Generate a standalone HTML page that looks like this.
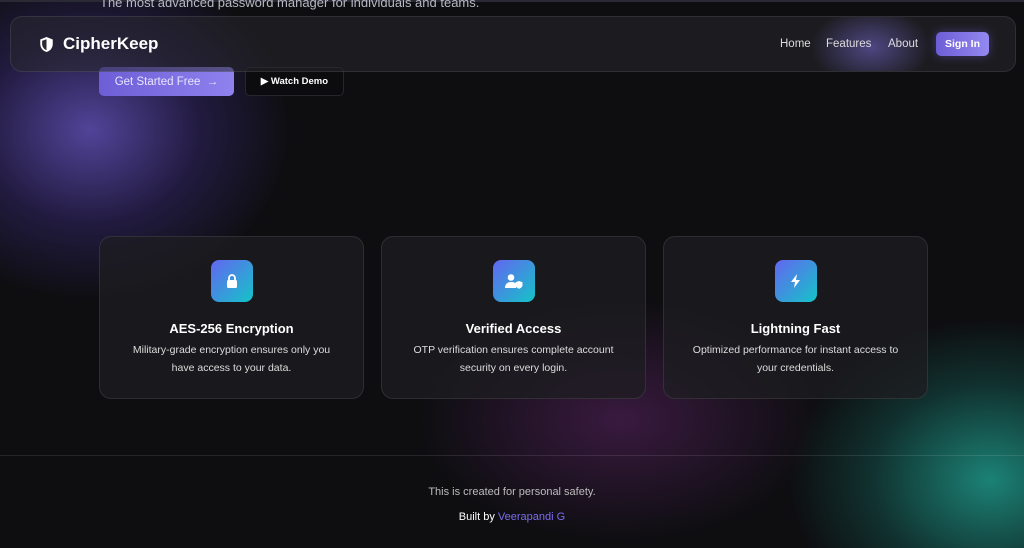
<!DOCTYPE html>
<html><head><meta charset="utf-8"><style>
*{margin:0;padding:0;box-sizing:border-box}
html{width:1024px;height:548px;overflow:hidden}
body{width:1024px;height:548px;overflow:hidden;background:#0e0e11;font-family:"Liberation Sans",sans-serif;color:#fff;position:relative}
.blob{position:absolute;border-radius:50%}
.nav{position:absolute;left:10px;top:16px;width:1006px;height:56px;border-radius:12px;background:rgba(40,40,46,.55);border:1px solid rgba(255,255,255,.09);overflow:hidden}
.card{position:absolute;top:236px;width:265px;height:163px;border-radius:12px;background:rgba(30,30,34,.75);border:1px solid rgba(255,255,255,.09);text-align:center}
.ic{position:absolute;left:111px;top:23px;width:42px;height:42px;border-radius:8px;background:linear-gradient(135deg,#6366f1,#14c4c8);display:flex;align-items:center;justify-content:center}
.card h3{position:absolute;top:84px;width:100%;font-size:13px;font-weight:bold}
.card p{position:absolute;top:104px;left:24px;right:24px;font-size:10.5px;line-height:18px;color:#ddd}
</style></head><body>
<div class="blob" style="left:-110px;top:-40px;width:400px;height:340px;background:radial-gradient(closest-side,rgba(110,90,210,.7),rgba(70,50,150,.35) 55%,transparent)"></div>
<div class="blob" style="left:420px;top:300px;width:400px;height:240px;background:radial-gradient(closest-side,rgba(110,40,120,.45),transparent)"></div>
<div class="blob" style="left:790px;top:320px;width:400px;height:320px;background:radial-gradient(closest-side,rgba(30,150,135,.85),rgba(20,100,90,.4) 60%,transparent)"></div>
<div style="position:absolute;left:0;top:0;width:1024px;height:2px;background:#2a2a35"></div>
<div style="position:absolute;left:100px;top:-5px;font-size:13px;color:#b8b8c4">The most advanced password manager for individuals and teams.</div>
<div style="position:absolute;left:99px;top:67px;width:135px;height:29px;border-radius:5px;background:linear-gradient(90deg,#6d5ed6,#8f82ee);font-size:11.5px;color:#e8e6ff;display:flex;align-items:center;justify-content:center">Get Started Free &nbsp;→</div>
<div style="position:absolute;left:245px;top:67px;width:99px;height:29px;border-radius:5px;background:#0c0c0f;border:1px solid #26262c;font-size:9.5px;font-weight:bold;display:flex;align-items:center;justify-content:center">▶ Watch Demo</div>
<div class="nav">
<div class="blob" style="left:800px;top:-10px;width:120px;height:80px;background:radial-gradient(closest-side,rgba(120,105,210,.55),transparent)"></div>
<svg style="position:absolute;left:28px;top:19px" width="15" height="17" viewBox="0 0 24 26"><path d="M12 1L2 5v7c0 6.5 4.3 11.5 10 13 5.7-1.5 10-6.5 10-13V5z" fill="#fff"/><path d="M12 4.5v17.5c-4-1.4-7-5.3-7-10V7z" fill="#2a2a30"/></svg>
<div style="position:absolute;left:52px;top:17px;font-size:17px;font-weight:bold">CipherKeep</div>
<div style="position:absolute;left:769px;top:21px;font-size:11.5px;color:#ddd">Home</div>
<div style="position:absolute;left:815px;top:21px;font-size:11.5px;color:#ddd">Features</div>
<div style="position:absolute;left:877px;top:21px;font-size:11.5px;color:#ddd">About</div>
<div style="position:absolute;left:925px;top:15px;width:53px;height:24px;border-radius:5px;background:linear-gradient(90deg,#6d5ed6,#9488f0);font-size:10.5px;font-weight:bold;display:flex;align-items:center;justify-content:center;box-shadow:0 0 10px rgba(120,100,230,.4)">Sign In</div>
</div>
<div class="card" style="left:99px"><div class="ic"><svg width="16" height="16" viewBox="0 0 16 16"><path d="M5 7V5a3 3 0 016 0v2" stroke="#fff" stroke-width="1.8" fill="none"/><rect x="3" y="7" width="10" height="8" rx="1.5" fill="#fff"/></svg></div><h3>AES-256 Encryption</h3><p>Military-grade encryption ensures only you have access to your data.</p></div>
<div class="card" style="left:381px"><div class="ic"><svg width="20" height="16" viewBox="0 0 20 16"><circle cx="7" cy="4.5" r="3.3" fill="#fff"/><path d="M1 15c0-4 2.5-6 6-6s4 1 5 2v4z" fill="#fff"/><path d="M15 8l3.5 1.3v2.5c0 2-1.5 3.4-3.5 4-2-.6-3.5-2-3.5-4V9.3z" fill="#fff"/></svg></div><h3>Verified Access</h3><p>OTP verification ensures complete account security on every login.</p></div>
<div class="card" style="left:663px"><div class="ic"><svg width="12" height="16" viewBox="0 0 12 16"><path d="M7 1L1 9h4l-1 6 6-8H6z" fill="#fff"/></svg></div><h3>Lightning Fast</h3><p>Optimized performance for instant access to your credentials.</p></div>
<div style="position:absolute;left:0;top:455px;width:1024px;height:1px;background:rgba(255,255,255,.1)"></div>
<div style="position:absolute;left:0;width:1024px;top:486px;text-align:center;font-size:11px;color:#bbb">This is created for personal safety.</div>
<div style="position:absolute;left:0;width:1024px;top:511px;text-align:center;font-size:11px;color:#fff">Built by <span style="color:#7b6cf0">Veerapandi G</span></div>
</body></html>
